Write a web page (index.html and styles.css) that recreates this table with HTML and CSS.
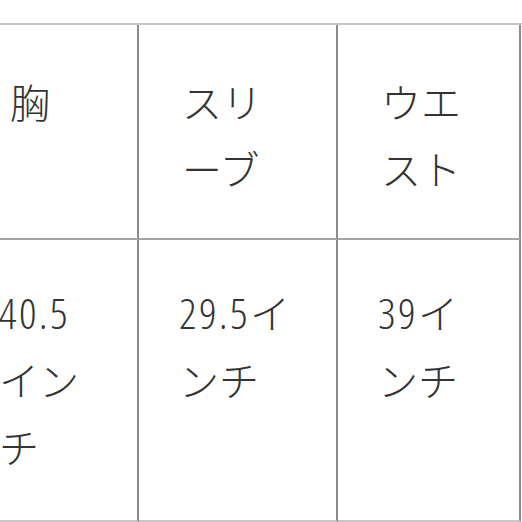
FILE: index.html
```html
<!DOCTYPE html>
<html lang="ja">
<head>
<meta charset="utf-8">
<link rel="stylesheet" href="styles.css">
</head>
<body>
<div class="size-table">
  <div class="cell head c1">胸</div>
  <div class="cell head c2">スリーブ</div>
  <div class="cell head c3">ウエスト</div>
  <div class="cell data c1"><span class="num">40.5</span>インチ</div>
  <div class="cell data c2"><span class="num">29.5</span>インチ</div>
  <div class="cell data c3"><span class="num">39</span>インチ</div>
</div>
</body>
</html>
```

FILE: styles.css
```css
html, body {
  margin: 0;
  padding: 0;
  background: #ffffff;
  overflow: hidden;
}

.size-table {
  display: grid;
  grid-template-columns: 180px 199px 183px;
  grid-template-rows: 215px 282px;
  margin-top: 23px;
  margin-left: -41px;
  border-top: 2px solid #c4c4c4;
  font-family: "Noto Sans CJK JP", "Noto Sans", sans-serif;
  font-weight: 300;
  font-size: 40px;
  line-height: 67px;
  color: #333333;
}

.cell {
  box-sizing: border-box;
  border-right: 2px solid #8c8c8c;
  border-bottom: 2px solid #a6a6a6;
  padding-top: 43px;
  padding-left: 40px;
  word-break: break-all;
}

.data {
  padding-top: 39px;
  border-bottom-color: #c8c8c8;
}

.head {
  padding-left: 43px;
}

.head.c1 {
  padding-left: 51px;
}

.c1 { padding-right: 45px; }
.c2 { padding-right: 40px; }
.c3 { padding-right: 27px; }

.num {
  font-family: "Open Sans", "Noto Sans CJK JP", sans-serif;
  font-stretch: 75%;
  font-weight: 300;
  font-size: 43px;
  letter-spacing: 2.5px;
}
```
